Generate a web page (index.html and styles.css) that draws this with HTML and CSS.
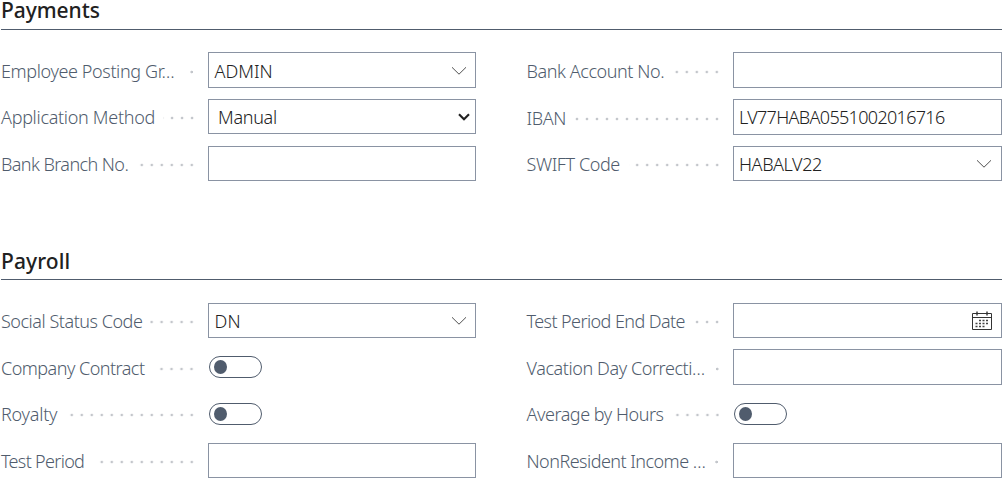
FILE: index.html
```html
<!DOCTYPE html>
<html lang="en">
<head>
<meta charset="utf-8">
<title>Employee Card</title>
<link rel="stylesheet" href="styles.css">
</head>
<body>
<main class="card">
  <section class="group">
    <h2 class="group-title">Payments</h2>
    <div class="columns payments">
      <div class="column">
        <div class="field tall"><span class="label t38">Employee Posting Gr…</span><span class="leader"></span>
          <div class="box"><span class="value">ADMIN</span><svg class="chevron" viewBox="0 0 16 10"><path d="M1 1.3 8 8.2 15 1.3"/></svg></div></div>
        <div class="field"><span class="label t30">Application Method</span><span class="leader close"></span>
          <div class="box select"><span class="value t30">Manual</span><svg class="arrow" viewBox="0 0 12 8"><path d="M1 1.2 6 6.2 11 1.2"/></svg></div></div>
        <div class="field"><span class="label t58">Bank Branch No.</span><span class="leader"></span>
          <div class="box"></div></div>
      </div>
      <div class="column">
        <div class="field tall"><span class="label t42">Bank Account No.</span><span class="leader"></span>
          <div class="box"></div></div>
        <div class="field tall"><span class="label t38">IBAN</span><span class="leader"></span>
          <div class="box raised"><span class="value t66">LV77HABA0551002016716</span></div></div>
        <div class="field"><span class="label t42">SWIFT Code</span><span class="leader"></span>
          <div class="box"><span class="value t42">HABALV22</span><svg class="chevron" viewBox="0 0 16 10"><path d="M1 1.3 8 8.2 15 1.3"/></svg></div></div>
      </div>
    </div>
  </section>
  <section class="group">
    <h2 class="group-title payroll-title">Payroll</h2>
    <div class="columns payroll">
      <div class="column">
        <div class="field"><span class="label t47">Social Status Code</span><span class="leader close"></span>
          <div class="box"><span class="value wide">DN</span><svg class="chevron" viewBox="0 0 16 10"><path d="M1 1.3 8 8.2 15 1.3"/></svg></div></div>
        <div class="field tall"><span class="label t50">Company Contract</span><span class="leader"></span>
          <div class="toggle"><span class="knob"></span></div></div>
        <div class="field"><span class="label t24">Royalty</span><span class="leader"></span>
          <div class="toggle"><span class="knob"></span></div></div>
        <div class="field"><span class="label t66">Test Period</span><span class="leader"></span>
          <div class="box"></div></div>
      </div>
      <div class="column">
        <div class="field"><span class="label t58">Test Period End Date</span><span class="leader"></span>
          <div class="box"><svg class="calendar" viewBox="0 0 20 20">
            <path class="frame" d="M.5 2.5h19v16H.5zM.5 6.5h19"/>
            <path class="rings" d="M5 .5v4M15 .5v4"/>
            <path class="days" d="M7 9.5h9.500M3.500 12.500h13M3.500 15.500h9.500"/>
          </svg></div></div>
        <div class="field tall"><span class="label t42">Vacation Day Correcti…</span><span class="leader"></span>
          <div class="box"></div></div>
        <div class="field"><span class="label t47">Average by Hours</span><span class="leader"></span>
          <div class="toggle"><span class="knob"></span></div></div>
        <div class="field"><span class="label t50">NonResident Income …</span><span class="leader"></span>
          <div class="box"></div></div>
      </div>
    </div>
  </section>
</main>
</body>
</html>
```
FILE: styles.css
```css
* { box-sizing: border-box; }

body {
  margin: 0;
  background: #fff;
  color: #212121;
  font: 300 18px/24px "Noto Sans", "Open Sans", sans-serif;
}

.card { padding: 0 3px 0 1px; height: 483px; }

.group { height: 250px; }
.group + .group { height: 233px; }

.group-title {
  margin: 0;
  height: 30px;
  border-bottom: 1px solid #505c6d;
  font-size: 21px;
  font-weight: 500;
  line-height: 21px;
  letter-spacing: -0.05px;
}

.payroll-title { line-height: 22px; letter-spacing: 0.1px; }

.columns {
  display: grid;
  grid-template-columns: 475px 475px;
  column-gap: 50px;
}

.payments { padding-top: 22px; }
.payroll { padding-top: 23px; }

.column { display: grid; align-content: start; }
.payments .column { grid-template-rows: 47px 47px 35px; }
.payroll .column { grid-template-rows: 46px 47px 47px 35px; }

.field {
  display: grid;
  grid-template-columns: max-content 1fr 268px;
  align-items: center;
  height: 35px;
}
.field.tall { height: 36px; }
.column + .column .field { grid-template-columns: max-content 1fr 269px; width: 476px; }

.label {
  color: #505c6d;
  white-space: nowrap;
  padding-top: 1px;
}
.column + .column .label { padding-left: 0.5px; }

/* Dotted line between a caption and its control, counted from the right */
.leader {
  height: 4px;
  margin: 3px 14px 0 10px;
  background: radial-gradient(circle at 8px 2px, #c3c6cb 1px, transparent 1.7px) right center / 10px 4px repeat-x;
}
.leader.close { margin-left: 8px; }
.column + .column .leader { margin-left: 9px; }

.box {
  display: flex;
  align-items: center;
  justify-content: space-between;
  height: 100%;
  border: 1px solid #8a93a3;
  padding: 1px 8px 0 5.5px;
}
.column + .column .box { padding-right: 9px; padding-left: 5px; }
.box.select { padding-left: 9px; padding-right: 5px; }
.box.raised { padding-top: 0; padding-bottom: 1px; }

.value { white-space: nowrap; }

.chevron { width: 16px; height: 10px; margin: 0 0 0 auto; fill: none; stroke: #505050; stroke-width: 1; }
.arrow { width: 12px; height: 8px; margin-top: -1px; fill: none; stroke: #212121; stroke-width: 2.1; }
.calendar { width: 20px; height: 20px; margin: 0 0 0 auto; fill: none; }
.calendar .frame { stroke: #333; stroke-width: 1; }
.calendar .rings { stroke: #333; stroke-width: 1.4; }
.calendar .days { stroke: #444; stroke-width: 1.6; stroke-dasharray: 2 1.5; }

.toggle {
  display: flex;
  align-items: center;
  align-self: start;
  width: 53px;
  height: 22px;
  margin: 7px 0 0 1px;
  border: 1px solid #505c6d;
  border-radius: 11px;
  padding-left: 4px;
}
.knob { width: 13px; height: 14px; border-radius: 50%; background: #505c6d; }

/* Tracking steps */
.t24 { letter-spacing: -0.24px; }
.t30 { letter-spacing: -0.3px; }
.t38 { letter-spacing: -0.38px; }
.t42 { letter-spacing: -0.42px; }
.t47 { letter-spacing: -0.47px; }
.t50 { letter-spacing: -0.53px; }
.t58 { letter-spacing: -0.58px; }
.t66 { letter-spacing: -0.68px; }
.wide { letter-spacing: 0.2px; }
```
